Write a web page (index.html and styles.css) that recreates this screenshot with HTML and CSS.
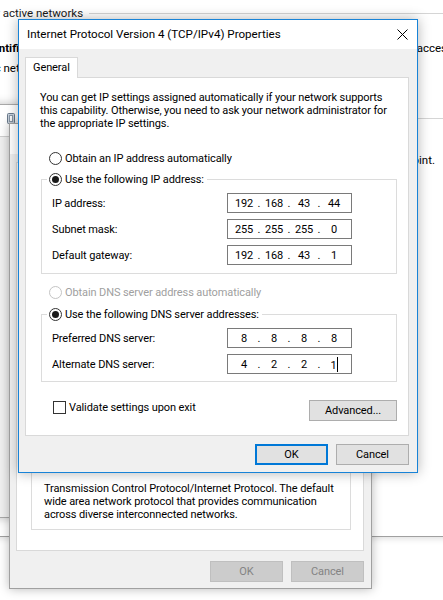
FILE: index.html
```html
<!DOCTYPE html>
<html lang="en">
<head>
<meta charset="utf-8">
<title>Internet Protocol Version 4 (TCP/IPv4) Properties</title>
<link rel="stylesheet" href="styles.css">
</head>
<body>
<div class="desktop">

  <section class="win nsc">
    <div class="nsc-head h-active"><span>View your active networks</span></div>
    <div class="nsc-net">
      <div class="net-name">
        <div class="net-title">Unidentified network</div>
        <div class="net-type">Public network</div>
      </div>
      <div class="net-access">Access type:&nbsp;&nbsp;&nbsp;No network access</div>
    </div>
    <div class="nsc-head h-change"><span>Change your networking settings</span></div>
    <div class="nsc-task">Set up a broadband, dial-up, or VPN connection; or set up a router or access point.</div>
  </section>

  <section class="win status">
    <div class="win-title status-title">
      <svg class="adapter" width="8" height="16" viewBox="0 0 8 16"><rect x="0.5" y="0.5" width="7" height="10" rx="1" fill="#c9d3de" stroke="#6b7b8c"/><rect x="2.5" y="2.5" width="3" height="6" fill="#fff" stroke="#8a98a8"/><rect x="3" y="11" width="2" height="4" fill="#3a8fd0"/></svg>
      <span>Ethernet Status</span>
    </div>
  </section>

  <section class="win ethprops">
    <div class="win-title ep-title"><span>Ethernet Properties</span></div>
    <div class="ep-body">
      <div class="ep-page">
        <div class="ep-group">
          <p class="ep-desc">Transmission Control Protocol/Internet Protocol. The default wide area network protocol that provides communication across diverse interconnected networks.</p>
        </div>
      </div>
      <div class="btn-row ep-buttons">
        <button class="btn" disabled>OK</button>
        <button class="btn" disabled>Cancel</button>
      </div>
    </div>
  </section>

  <section class="win ipv4">
    <header class="titlebar">
      <span class="title">Internet Protocol Version 4 (TCP/IPv4) Properties</span>
      <svg class="close" width="11" height="11" viewBox="0 0 11 11"><path d="M0.5 0.5 L10.5 10.5 M10.5 0.5 L0.5 10.5" stroke="#000" stroke-width="1" fill="none"/></svg>
    </header>
    <div class="dlg-body">
      <div class="tabs"><div class="tab">General</div></div>
      <div class="page">
        <p class="intro">You can get IP settings assigned automatically if your network supports this capability. Otherwise, you need to ask your network administrator for the appropriate IP settings.</p>

        <div class="opt opt-auto"><span class="radio"></span><span>Obtain an IP address automatically</span></div>
        <fieldset class="group g-ip">
          <legend class="opt"><span class="radio on"></span><span>Use the following IP address:</span></legend>
          <div class="grid">
            <label>IP address:</label>
            <div class="ip"><span class="oct">192</span><span class="dot">.</span><span class="oct">168</span><span class="dot">.</span><span class="oct">43</span><span class="dot">.</span><span class="oct">44</span></div>
            <label>Subnet mask:</label>
            <div class="ip"><span class="oct">255</span><span class="dot">.</span><span class="oct">255</span><span class="dot">.</span><span class="oct">255</span><span class="dot">.</span><span class="oct">0</span></div>
            <label>Default gateway:</label>
            <div class="ip"><span class="oct">192</span><span class="dot">.</span><span class="oct">168</span><span class="dot">.</span><span class="oct">43</span><span class="dot">.</span><span class="oct">1</span></div>
          </div>
        </fieldset>

        <div class="opt opt-dns disabled"><span class="radio"></span><span>Obtain DNS server address automatically</span></div>
        <fieldset class="group g-dns">
          <legend class="opt"><span class="radio on"></span><span>Use the following DNS server addresses:</span></legend>
          <div class="grid">
            <label>Preferred DNS server:</label>
            <div class="ip"><span class="oct">8</span><span class="dot">.</span><span class="oct">8</span><span class="dot">.</span><span class="oct">8</span><span class="dot">.</span><span class="oct">8</span></div>
            <label>Alternate DNS server:</label>
            <div class="ip"><span class="oct">4</span><span class="dot">.</span><span class="oct">2</span><span class="dot">.</span><span class="oct">2</span><span class="dot">.</span><span class="oct">1<span class="caret"></span></span></div>
          </div>
        </fieldset>

        <div class="bottom-row">
          <div class="check-opt"><span class="checkbox"></span><span>Validate settings upon exit</span></div>
          <button class="btn adv">Advanced...</button>
        </div>
      </div>
      <div class="btn-row dlg-buttons">
        <button class="btn default">OK</button>
        <button class="btn">Cancel</button>
      </div>
    </div>
  </section>

</div>
</body>
</html>
```

FILE: styles.css
```css
* { box-sizing: border-box; }
html, body { margin: 0; padding: 0; }
body {
  width: 443px; height: 600px; overflow: hidden;
  background: #fff; color: #000;
  font-family: Roboto, "Noto Sans", sans-serif;
  font-size: 11px; line-height: 13px; letter-spacing: -0.1px;
}
p { margin: 0; }
.desktop { position: relative; width: 443px; height: 600px; overflow: hidden; background: #fff; }
.win { position: absolute; }

/* background: Network and Sharing Center */
.nsc {
  left: -100px; top: 0; width: 700px; height: 537px;
  background: #fff; border-bottom: 1px solid #a0a0a0;
  box-shadow: 0 2px 6px rgba(0,0,0,0.12);
  padding-top: 5px; line-height: 16px; font-size: 11.5px; letter-spacing: 0;
}
.nsc-head { display: flex; align-items: center; height: 16px; padding-left: 50px; color: #1a1a1a; }
.nsc-head::after { content: ""; flex: 1; height: 1px; background: #d5d5d5; margin-left: 6px; }
.nsc-net { display: flex; width: 553px; margin-top: 17px; line-height: 20px; }
.net-name { padding-left: 69px; }
.net-title { font-weight: bold; }
.net-access { margin-left: auto; }
.h-change { margin-top: 32px; }
.nsc-task { width: 535px; text-align: right; margin-top: 26px; }

.win-title {
  height: 30px; background: #fff; flex: none;
  display: flex; align-items: center; gap: 6px;
}

/* background: Ethernet Status */
.status {
  left: -150px; top: 104px; width: 300px; height: 414px;
  background: #f0f0f0; border: 1px solid #a8a8a8;
  box-shadow: 0 0 9px rgba(0,0,0,0.25);
}
.status-title { height: 32px; border-bottom: 1px solid #cfcfcf; padding-left: 156px; }
.adapter { display: block; flex: none; }

/* middle: Ethernet Properties */
.ethprops {
  left: 9px; top: 123px; width: 363px; height: 466px;
  background: #f0f0f0; border: 1px solid #a0a0a0;
  box-shadow: 0 0 10px rgba(0,0,0,0.28);
  display: flex; flex-direction: column;
}
.ep-title { padding-left: 30px; }
.ep-body { flex: 1; display: flex; flex-direction: column; padding: 8px 7px 6px 6px; }
.ep-page {
  flex: 1; background: #fff; border: 1px solid #d9d9d9;
  display: flex; flex-direction: column; justify-content: flex-end;
  padding: 0 12px 20px 14px;
}
.ep-group { border: 1px solid #dcdcdc; padding: 40px 10px 8px 12px; }
.ep-buttons { margin-top: 10px; }
.ep-buttons .btn:disabled { background: #cccccc; border-color: #bfbfbf; color: #838383; }

/* front: IPv4 dialog */
.ipv4 {
  left: 18px; top: 19px; width: 400px; height: 454px;
  border: 1px solid #1883d7; background: #f0f0f0;
  box-shadow: 0 0 12px rgba(0,0,0,0.3);
  display: flex; flex-direction: column;
}
.titlebar {
  height: 29px; background: #fff; flex: none;
  display: flex; align-items: center; justify-content: space-between;
  padding: 0 9px 0 8px;
}
.title { font-size: 11.6px; letter-spacing: 0; }
.close { display: block; }
.dlg-body { flex: 1; padding: 8px 8px 7px 6px; display: flex; flex-direction: column; }
.tabs { display: flex; height: 20px; position: relative; z-index: 1; }
.tab {
  width: 53px; height: 21px; background: #fff;
  border: 1px solid #d9d9d9; border-bottom: none;
  padding: 3px 0 0 7px; line-height: 13px;
}
.page {
  height: 359px; background: #fff; border: 1px solid #d9d9d9;
  padding: 13px 0 0 0;
}
.intro { padding: 0 20px 0 14px; }

.opt { display: flex; align-items: center; height: 13px; line-height: 13px; white-space: nowrap; }
.radio {
  width: 13px; height: 13px; border: 1px solid #333; border-radius: 50%;
  background: #fff; margin-right: 3px; flex: none; position: relative;
}
.radio.on::after {
  content: ""; position: absolute; left: 2px; top: 2px; width: 7px; height: 7px;
  border-radius: 50%; background: #1a1a1a;
}
.opt-auto { margin: 22px 0 0 23px; }
.disabled { color: #a0a0a0; }
.disabled .radio { border-color: #c4c4c4; }

.group {
  margin: 8px 11px 0 15px; padding: 7px 0 7px 10px;
  border: 1px solid #dcdcdc; min-width: 0;
}
.group legend { padding: 0 3px 0 2px; margin-left: -5px; }
.g-ip { padding-bottom: 8px; }
.opt-dns { margin: 12px 0 0 23px; }
.g-dns { margin-top: 9px; }
.grid { display: grid; grid-template-columns: 175px 125px; row-gap: 6px; align-items: center; }
.ip {
  height: 20px; border: 1px solid #7a7a7a; background: #fff;
  display: flex; align-items: center; padding-left: 4px;
}
.oct { width: 24px; text-align: center; }
.dot { width: 6px; text-align: center; }
.caret { display: inline-block; width: 1px; height: 15px; background: #000; vertical-align: -3px; }

.bottom-row { display: flex; align-items: flex-start; justify-content: space-between; margin: 18px 11px 0 27px; }
.check-opt { display: flex; align-items: center; padding-top: 1px; line-height: 13px; }
.checkbox { width: 13px; height: 13px; border: 1px solid #333; background: #fff; margin-right: 3px; }

.btn-row { display: flex; justify-content: flex-end; gap: 8px; }
.dlg-buttons { margin-top: 8px; }
.btn {
  width: 73px; height: 21px; padding: 0; margin: 0;
  font: inherit; letter-spacing: inherit; line-height: 13px; color: #000;
  background: #e1e1e1; border: 1px solid #adadad; border-radius: 0;
}
.btn.default { border: 2px solid #0078d7; }
.adv { width: 88px; }
```
